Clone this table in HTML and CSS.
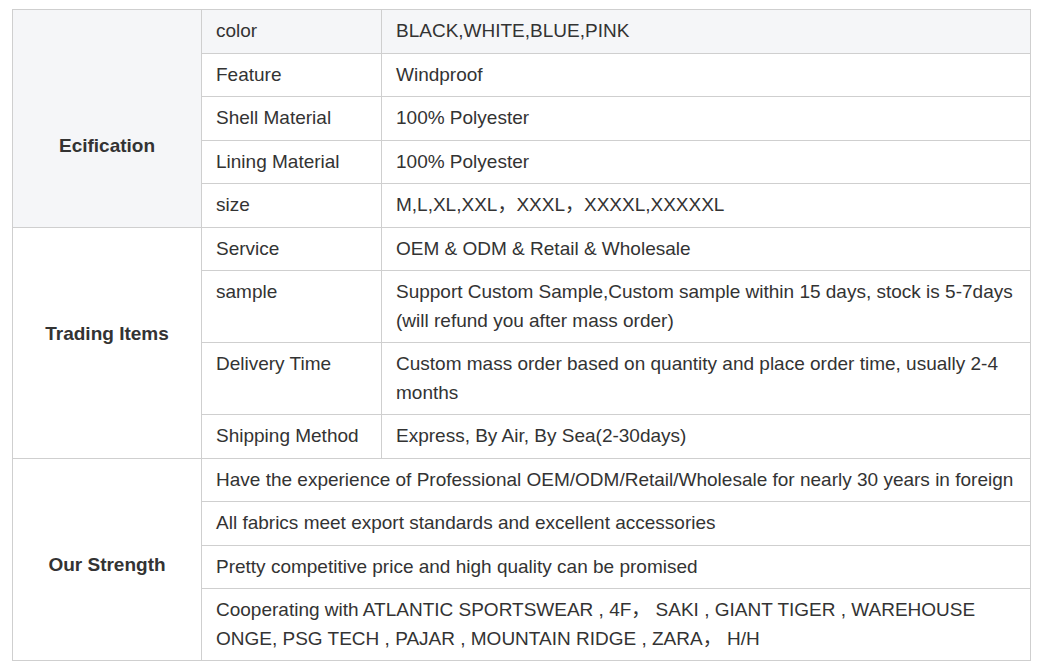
FILE: index.html
```html
<!DOCTYPE html>
<html>
<head>
<meta charset="utf-8">
<link rel="stylesheet" href="styles.css">
</head>
<body>
<div class="page">
<table class="spec">
  <colgroup>
    <col class="c1"><col class="c2"><col class="c3">
  </colgroup>
  <tbody>
    <tr class="first">
      <th rowspan="5" class="g-ecification">Ecification</th>
      <td>color</td><td>BLACK,WHITE,BLUE,PINK</td>
    </tr>
    <tr><td>Feature</td><td>Windproof</td></tr>
    <tr><td>Shell Material</td><td>100% Polyester</td></tr>
    <tr><td>Lining Material</td><td>100% Polyester</td></tr>
    <tr><td>size</td><td>M,L,XL,XXL，XXXL，XXXXL,XXXXXL</td></tr>
    <tr>
      <th rowspan="4" class="g-trading">Trading Items</th>
      <td>Service</td><td>OEM &amp; ODM &amp; Retail &amp; Wholesale</td>
    </tr>
    <tr><td>sample</td><td>Support Custom Sample,Custom sample within 15 days, stock is 5-7days (will refund you after mass order)</td></tr>
    <tr><td>Delivery Time</td><td>Custom mass order based on quantity and place order time, usually 2-4 months</td></tr>
    <tr><td>Shipping Method</td><td>Express, By Air, By Sea(2-30days)</td></tr>
    <tr>
      <th rowspan="4" class="g-strength">Our Strength</th>
      <td colspan="2">Have the experience of Professional OEM/ODM/Retail/Wholesale for nearly 30 years in foreign</td>
    </tr>
    <tr><td colspan="2">All fabrics meet export standards and excellent accessories</td></tr>
    <tr><td colspan="2">Pretty competitive price and high quality can be promised</td></tr>
    <tr><td colspan="2">Cooperating with ATLANTIC SPORTSWEAR , 4F， SAKI , GIANT TIGER , WAREHOUSE ONGE, PSG TECH , PAJAR , MOUNTAIN RIDGE , ZARA， H/H</td></tr>
  </tbody>
</table>
</div>
</body>
</html>
```

FILE: styles.css
```css
html, body {
  margin: 0;
  padding: 0;
  background: #ffffff;
}
.page {
  padding: 9px 0 0 12px;
}
.spec {
  width: 1019px;
  border-collapse: collapse;
  font-family: "Liberation Sans", Arial, "Noto Sans CJK SC", sans-serif;
  font-size: 19px;
  line-height: 28.5px;
  color: #333333;
  table-layout: fixed;
}
.c1 { width: 189px; }
.c2 { width: 180px; }
.c3 { width: auto; }
.spec th, .spec td {
  border: 1px solid #cfcfcf;
  padding: 7px 14px;
  text-align: left;
  vertical-align: top;
}
.spec th {
  text-align: center;
  vertical-align: middle;
  font-weight: bold;
}
.spec th.g-ecification { padding-top: 63px; }
.spec th.g-trading { padding-bottom: 23px; }
.spec th.g-strength { padding-top: 19px; }
.spec tr.first th,
.spec tr.first td {
  background: #f5f6f8;
}
```
